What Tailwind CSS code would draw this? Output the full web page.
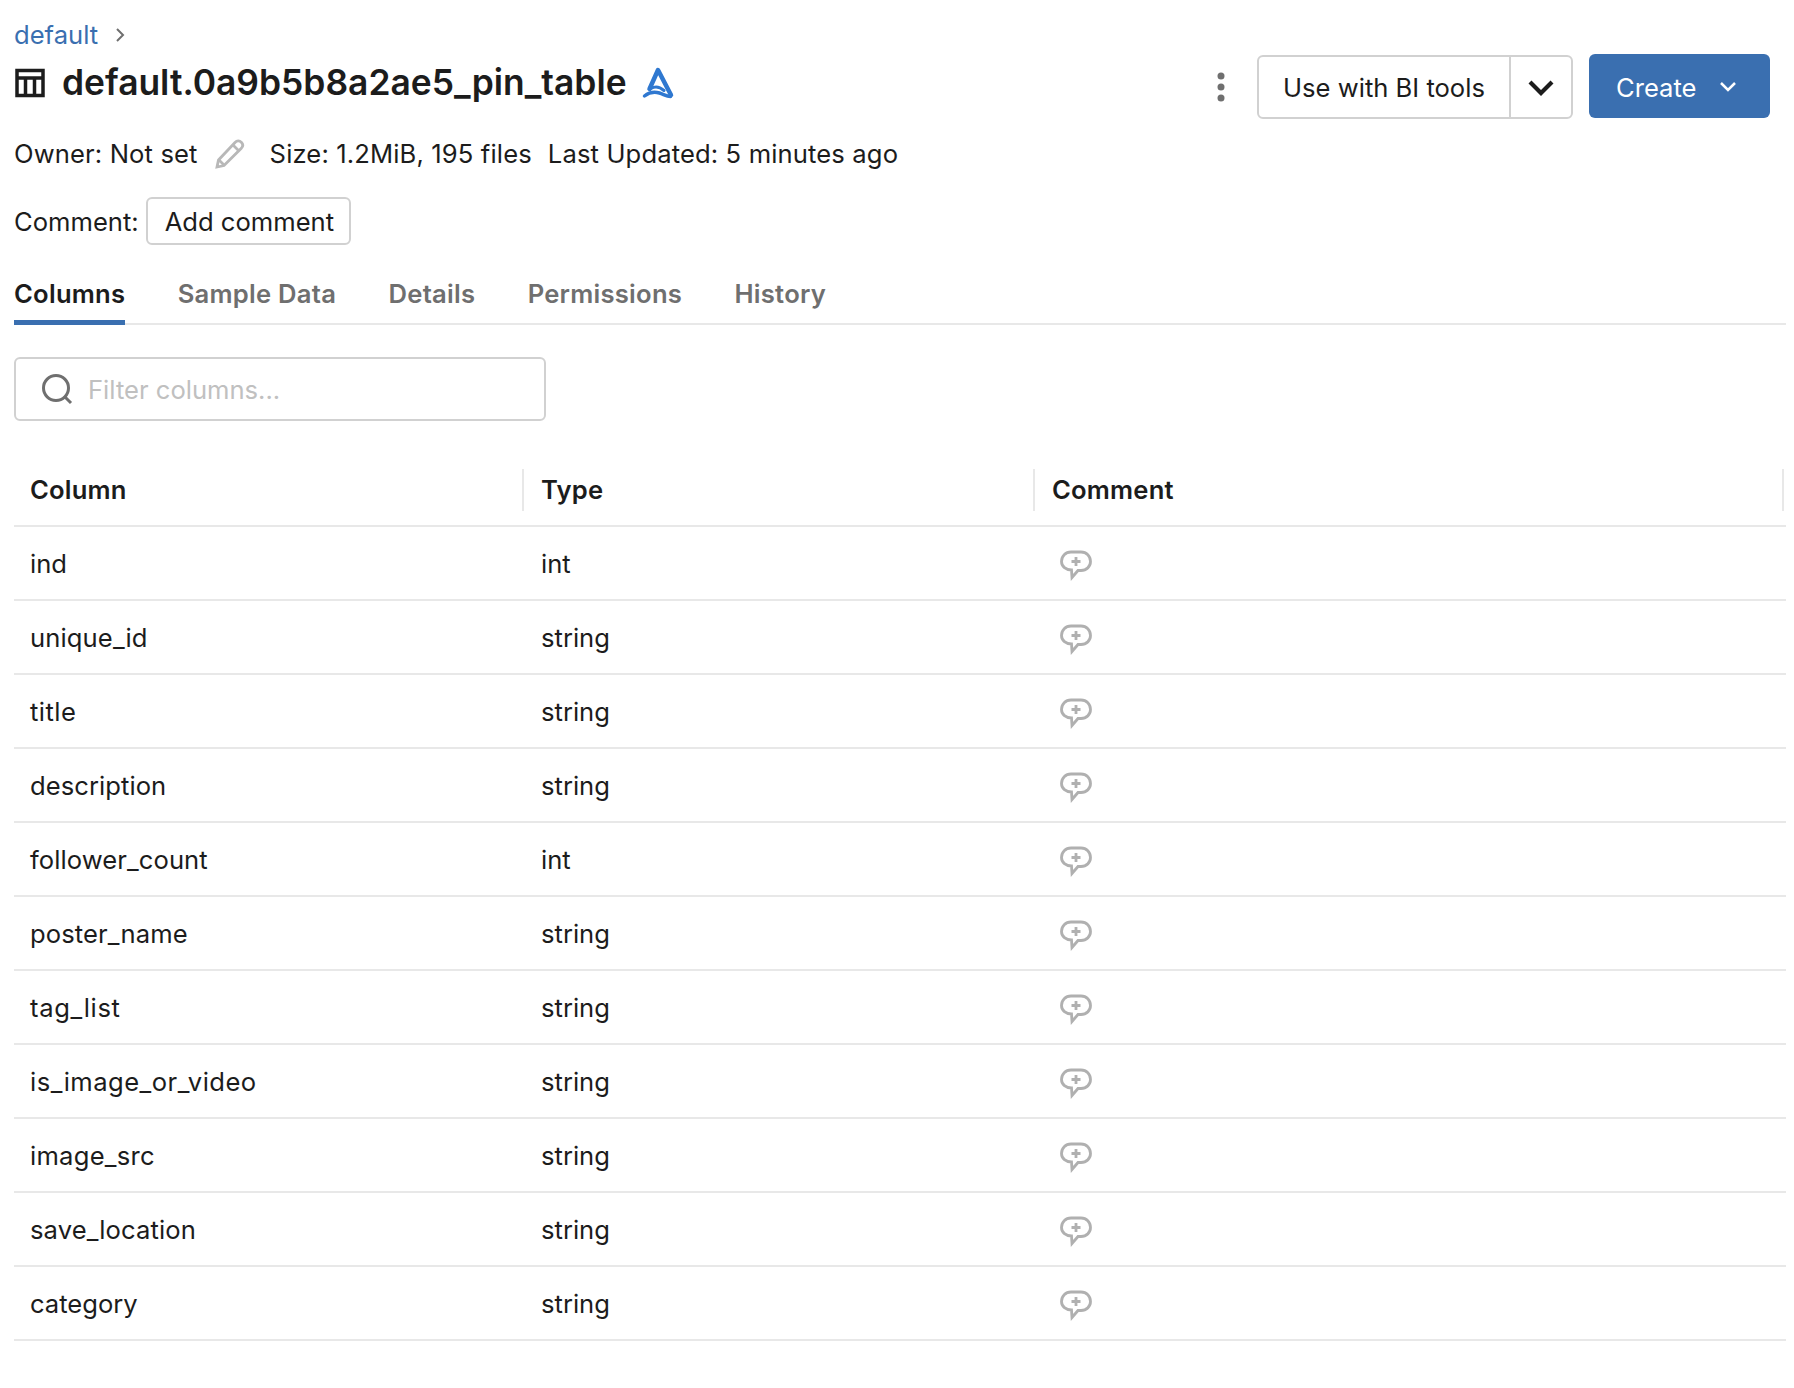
<!DOCTYPE html>
<html lang="en">
<head>
  <meta charset="UTF-8">
  <title>default.0a9b5b8a2ae5_pin_table</title>
  <script src="https://cdn.jsdelivr.net/npm/@tailwindcss/browser@4"></script>
</head>
<body class="bg-white text-[#1c1c1c] font-['Inter',sans-serif] text-[25.6px] w-[1794px] h-[1388px] overflow-hidden">
  <div class="pl-[14px] pr-[8px] pt-[18px]">
    <!-- Breadcrumb -->
    <div class="flex items-center gap-[16px] h-[34px] text-[#3a6fb0]">
      <span>default</span>
      <svg class="w-[12px] h-[18px] text-[#6f6f6f]" viewBox="0 0 12 18" fill="none" stroke="currentColor" stroke-width="2"><path d="M3 3l6 6-6 6"/></svg>
    </div>

    <!-- Title row -->
    <div class="flex items-center h-[66px] pr-[16px]">
      <svg class="w-[30px] h-[30px] ml-[1px] mr-[17px] mb-[5px]" viewBox="0 0 30 30" fill="none" stroke="#1c1c1c" stroke-width="3.500"><rect x="2" y="2.500" width="26" height="25"/><path d="M2 10h26M10.500 10v18M19.500 10v18"/></svg>
      <h1 class="text-[35.4px] font-semibold leading-none mb-[5px]">default.0a9b5b8a2ae5_pin_table</h1>
      <svg class="w-[34px] h-[34px] ml-[15px] mb-[5px]" viewBox="0 0 34 34" fill="none" stroke="#2f78d0" stroke-linecap="round" stroke-linejoin="round">
        <path stroke-width="4.500" d="M7.500 23L16 4l13 25"/>
        <path stroke-width="3" d="M9 22.500c4-2.500 9-1.500 13 2"/>
        <path stroke-width="3.500" d="M2.500 30c5-4 10-4.500 15-3 4 1.200 7 3.500 11 3.500"/>
      </svg>
      <div class="ml-auto flex items-center mt-[4px]">
        <svg class="w-[10px] h-[30px] mr-[31px]" viewBox="0 0 10 30" fill="#6f6f6f"><circle cx="5" cy="4" r="3.500"/><circle cx="5" cy="15" r="3.500"/><circle cx="5" cy="26" r="3.500"/></svg>
        <div class="flex h-[64px] w-[316px] border-2 border-[#d1d1d1] rounded-[6px] mr-[16px]">
          <div class="flex-1 flex items-center justify-center pt-[2px]">Use with BI tools</div>
          <div class="w-[62px] border-l-2 border-[#d1d1d1] flex items-center justify-center">
            <svg class="w-[28px] h-[18px]" viewBox="0 0 28 18" fill="none" stroke="#1c1c1c" stroke-width="4.200"><path d="M3 4l11 11L25 4"/></svg>
          </div>
        </div>
        <div class="flex items-center h-[64px] w-[181px] bg-[#3a6fb0] text-white rounded-[6px] pl-[27px] mb-[3px] pt-[5px]">
          <span>Create</span>
          <svg class="w-[18px] h-[12px] ml-[22px] mb-[3px]" viewBox="0 0 18 12" fill="none" stroke="currentColor" stroke-width="2.500"><path d="M2 2l7 7 7-7"/></svg>
        </div>
      </div>
    </div>

    <!-- Meta -->
    <div class="flex items-center h-[34px] mt-[19px] whitespace-nowrap tracking-[0.13px]">
      <span>Owner: Not set</span>
      <svg class="w-[32px] h-[32px] ml-[16px] mr-[24px]" viewBox="0 0 32 32" fill="none" stroke="#b8b8b8" stroke-width="2.800"><path d="M3 29l1.500-7L21 4.500c2-2 4.500-2 6.300-.2s1.800 4.300-.2 6.300L10 27.500z"/><path d="M19 7l6 6M5 22l5 5"/></svg>
      <span>Size: 1.2MiB, 195 files</span>
      <span class="ml-[16px]">Last Updated: 5 minutes ago</span>
    </div>

    <!-- Comment -->
    <div class="flex items-center mt-[26px] h-[48px]">
      <span class="pt-[2px]">Comment:</span>
      <div class="ml-[7px] h-[48px] pl-[17px] pr-[15px] pt-[2px] flex items-center border-2 border-[#d1d1d1] rounded-[6px]">Add comment</div>
    </div>

    <!-- Tabs -->
    <div class="flex gap-[52.4px] mt-[20px] border-b-2 border-[#e8e8e8] h-[60px] font-semibold text-[#6f6f6f] tracking-[0.25px]">
      <div class="h-[60px] pt-[10px] border-b-[5px] border-[#3a6fb0] text-[#1c1c1c]">Columns</div>
      <div class="pt-[10px]">Sample Data</div>
      <div class="pt-[10px]">Details</div>
      <div class="pt-[10px]">Permissions</div>
      <div class="pt-[10px]">History</div>
    </div>

    <!-- Filter -->
    <div class="flex items-center w-[532px] h-[64px] mt-[32px] border-2 border-[#d1d1d1] rounded-[6px] pl-[25px]">
      <svg class="w-[32px] h-[32px] mr-[15px]" viewBox="0 0 32 32" fill="none" stroke="#6f6f6f" stroke-width="3"><circle cx="15" cy="15" r="12.500"/><path d="M24 24l6 6"/></svg>
      <span class="text-[#c0c0c0] pt-[2px]">Filter columns...</span>
    </div>

    <!-- Table -->
    <div class="mt-[48px]">
      <div class="grid grid-cols-[510px_511px_1fr] h-[58px] border-b-2 border-[#e8e8e8] font-semibold tracking-[0.2px]">
        <div class="pl-[16px] h-[42px] flex items-center border-r-2 border-[#e8e8e8]">Column</div>
        <div class="pl-[17px] h-[42px] flex items-center border-r-2 border-[#e8e8e8]">Type</div>
        <div class="pl-[17px] h-[42px] flex items-center border-r-2 border-[#e8e8e8] mr-[2px]">Comment</div>
      </div>
      <div id="rows"></div>
    </div>
  </div>

  <template id="rowTpl">
    <div class="grid grid-cols-[511px_511px_1fr] h-[74px] items-center border-b-2 border-[#e8e8e8]">
      <div class="pl-[16px] pt-[2px] col-name"></div>
      <div class="pl-[16px] pt-[2px] col-type"></div>
      <div class="pl-[24px] pt-[4px]">
        <svg class="w-[32px] h-[32px]" viewBox="0 0 32 32" fill="none" stroke="#b0b0b0" stroke-width="2.800"><path d="M11 3h10c5.500 0 9.500 4 9.500 9.500 0 5-4 9-9.500 9h-3l-6 7-.5-7.500C6 21 1.500 17.500 1.500 12.500 1.500 7 5.500 3 11 3z"/><path d="M16 8v9M11.500 12.500h9"/></svg>
      </div>
    </div>
  </template>

  <script>
    // name, type, letter spacing that lines the name's width up with the picture
    const columns = [
      ['ind', 'int', 'tracking-normal'],
      ['unique_id', 'string', 'tracking-[0.12px]'],
      ['title', 'string', 'tracking-[0.45px]'],
      ['description', 'string', 'tracking-[0.05px]'],
      ['follower_count', 'int', 'tracking-[0.08px]'],
      ['poster_name', 'string', 'tracking-[0.1px]'],
      ['tag_list', 'string', 'tracking-[0.65px]'],
      ['is_image_or_video', 'string', 'tracking-[0.47px]'],
      ['image_src', 'string', 'tracking-[0.25px]'],
      ['save_location', 'string', 'tracking-[0.09px]'],
      ['category', 'string', 'tracking-normal'],
    ];
    const rows = document.getElementById('rows');
    const tpl = document.getElementById('rowTpl');
    columns.forEach(([name, type, spacing]) => {
      const row = tpl.content.cloneNode(true);
      const nameCell = row.querySelector('.col-name');
      nameCell.textContent = name;
      nameCell.classList.add(spacing);
      row.querySelector('.col-type').textContent = type;
      rows.appendChild(row);
    });
  </script>
</body>
</html>
